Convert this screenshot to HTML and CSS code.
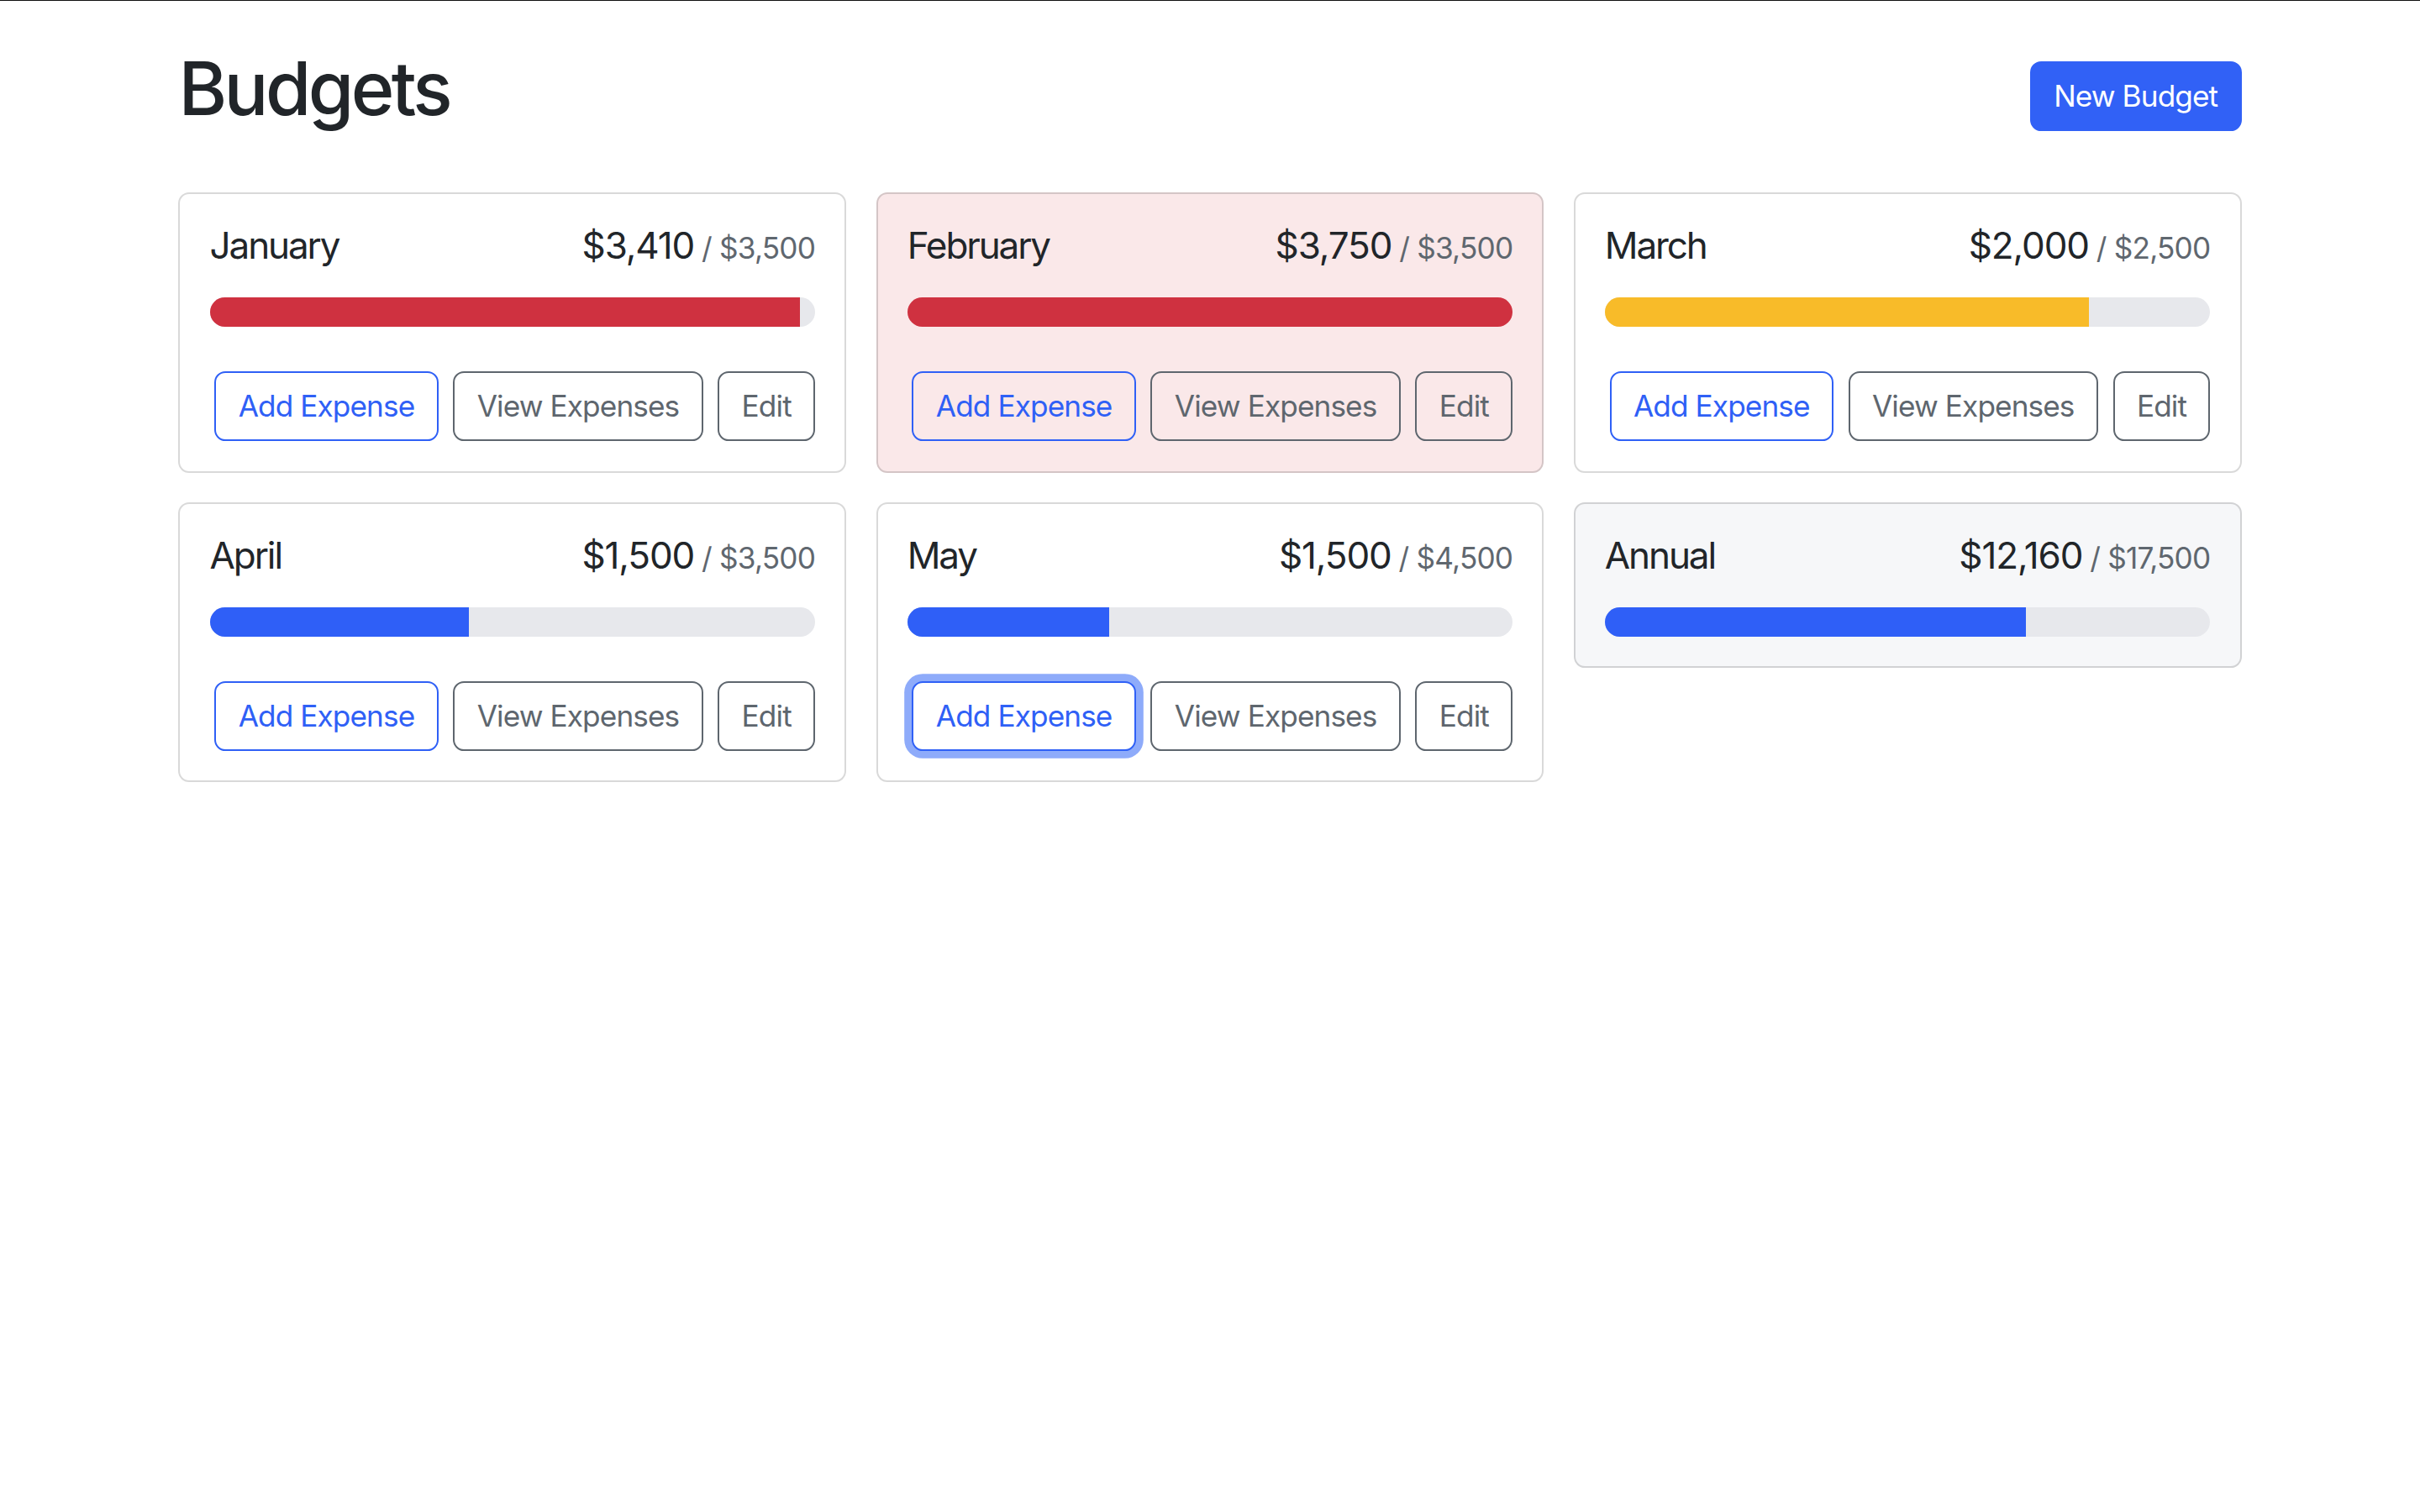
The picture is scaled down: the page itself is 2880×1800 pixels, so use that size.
FILE: index.html
```html
<!DOCTYPE html>
<html lang="en">
<head>
<meta charset="utf-8">
<title>Budgets</title>
<link rel="stylesheet" href="styles.css">
</head>
<body>
<div class="container">
  <div class="header">
    <h1 class="page-title">Budgets</h1>
    <button class="btn btn-primary">New Budget</button>
  </div>
  <div class="grid">
    <div class="card">
      <div class="card-body">
        <div class="card-title"><div class="name">January</div><div class="amount">$3,410<span class="max">/ $3,500</span></div></div>
        <div class="progress"><div class="bar bar-danger" style="width:97.43%"></div></div>
        <div class="actions"><button class="btn btn-outline-primary">Add Expense</button><button class="btn btn-outline-secondary">View Expenses</button><button class="btn btn-outline-secondary">Edit</button></div>
      </div>
    </div>
    <div class="card card-over">
      <div class="card-body">
        <div class="card-title"><div class="name">February</div><div class="amount">$3,750<span class="max">/ $3,500</span></div></div>
        <div class="progress"><div class="bar bar-danger" style="width:100%"></div></div>
        <div class="actions"><button class="btn btn-outline-primary">Add Expense</button><button class="btn btn-outline-secondary">View Expenses</button><button class="btn btn-outline-secondary">Edit</button></div>
      </div>
    </div>
    <div class="card">
      <div class="card-body">
        <div class="card-title"><div class="name">March</div><div class="amount">$2,000<span class="max">/ $2,500</span></div></div>
        <div class="progress"><div class="bar bar-warning" style="width:80%"></div></div>
        <div class="actions"><button class="btn btn-outline-primary">Add Expense</button><button class="btn btn-outline-secondary">View Expenses</button><button class="btn btn-outline-secondary">Edit</button></div>
      </div>
    </div>
    <div class="card">
      <div class="card-body">
        <div class="card-title"><div class="name">April</div><div class="amount">$1,500<span class="max">/ $3,500</span></div></div>
        <div class="progress"><div class="bar bar-primary" style="width:42.86%"></div></div>
        <div class="actions"><button class="btn btn-outline-primary">Add Expense</button><button class="btn btn-outline-secondary">View Expenses</button><button class="btn btn-outline-secondary">Edit</button></div>
      </div>
    </div>
    <div class="card">
      <div class="card-body">
        <div class="card-title"><div class="name">May</div><div class="amount">$1,500<span class="max">/ $4,500</span></div></div>
        <div class="progress"><div class="bar bar-primary" style="width:33.33%"></div></div>
        <div class="actions"><button class="btn btn-outline-primary is-focused">Add Expense</button><button class="btn btn-outline-secondary">View Expenses</button><button class="btn btn-outline-secondary">Edit</button></div>
      </div>
    </div>
    <div class="card card-light">
      <div class="card-body">
        <div class="card-title"><div class="name">Annual</div><div class="amount">$12,160<span class="max">/ $17,500</span></div></div>
        <div class="progress"><div class="bar bar-primary" style="width:69.49%"></div></div>
      </div>
    </div>
  </div>
</div>
</body>
</html>
```
FILE: styles.css
```css
* { box-sizing: border-box; }
html { background: #fff; }
body {
  margin: 0;
  border-top: 1px solid #111;
  font-family: Inter, "Noto Sans", "Liberation Sans", sans-serif;
  font-size: 35.2px;
  line-height: 1.5;
  color: #212529;
}
.container {
  width: 2508px;
  margin: 52px auto;
  padding: 0 26.4px;
}
.header {
  display: flex;
  align-items: center;
  gap: 17.6px;
  margin-bottom: 52.8px;
}
.page-title {
  margin: 0 auto 17.6px 0;
  font-size: 88px;
  font-weight: 500;
  line-height: 1.2;
  letter-spacing: -3.6px;
}
.btn {
  font-family: inherit;
  font-size: 35.2px;
  line-height: 1.5;
  padding: 13.2px 26.4px;
  border: 2.2px solid transparent;
  border-radius: 13.2px;
  background: transparent;
  cursor: pointer;
  white-space: nowrap;
  letter-spacing: -0.9px;
}
.btn-primary { background: #3161f6; border-color: #3161f6; color: #fff; }
.btn-outline-primary { color: #2f60f6; border-color: #2f60f6; }
.btn-outline-secondary { color: #5e666e; border-color: #5e666e; }
.is-focused { box-shadow: 0 0 0 8.8px #8eabfa; background: #fff; }
.grid {
  display: grid;
  grid-template-columns: repeat(3, minmax(0, 1fr));
  gap: 35.2px;
  align-items: start;
}
.card {
  border: 2.2px solid rgba(0, 0, 0, 0.15);
  border-radius: 13.2px;
  background: #fff;
}
.card-over { background: #fae8e9; }
.card-light { background: #f6f7f9; }
.card-body { padding: 35.2px; }
.card-title {
  display: flex;
  justify-content: space-between;
  align-items: baseline;
  font-size: 44px;
  line-height: 1.2;
  margin-bottom: 35.2px;
}
.name { margin-right: 17.6px; letter-spacing: -2.1px; }
.amount { display: flex; align-items: baseline; letter-spacing: -1.1px; }
.max {
  font-size: 35.2px;
  color: #5f676f;
  margin-left: 8.8px;
  letter-spacing: -0.8px;
}
.progress {
  display: flex;
  height: 35.2px;
  background: #e7e8ec;
  border-radius: 880px;
  overflow: hidden;
}
.bar { height: 100%; }
.bar-danger { background: #cf3140; }
.bar-warning { background: #f8bb29; }
.bar-primary { background: #2f5ff7; }
.actions {
  display: flex;
  gap: 17.6px;
  margin-top: 52.8px;
}
.actions .btn:first-child { margin-left: auto; }
```
